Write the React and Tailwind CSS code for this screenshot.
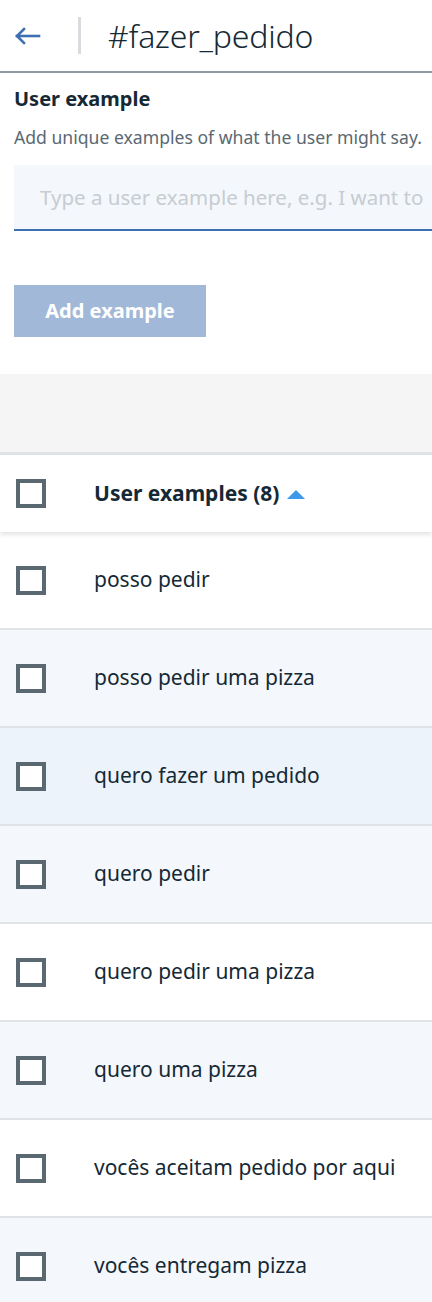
import React from 'react';

const examples = [
    { text: 'posso pedir', bg: 'bg-white' },
    { text: 'posso pedir uma pizza', bg: 'bg-[#f4f7fb]' },
    { text: 'quero fazer um pedido', bg: 'bg-[#edf3fb]' },
    { text: 'quero pedir', bg: 'bg-[#f4f7fb]' },
    { text: 'quero pedir uma pizza', bg: 'bg-white' },
    { text: 'quero uma pizza', bg: 'bg-[#f4f7fb]' },
    { text: 'vocês aceitam pedido por aqui', bg: 'bg-white' },
    { text: 'vocês entregam pizza', bg: 'bg-[#f4f7fb]' },
];

const Checkbox = () => (
    <span className="block w-[30px] h-[29px] border-[4px] border-[#5a6872] bg-white shrink-0"></span>
);

const App = () => {
    return (
        <div className="w-[432px] min-h-[1302px] overflow-hidden bg-white text-[#152935] font-['Noto_Sans','Open_Sans',sans-serif]">
            {/* header */}
            <header className="h-[73px] flex items-center border-b-2 border-[#8c9ba5]">
                <button className="w-[56px] pl-[14px] flex items-center text-[#3d70b2]">
                    <svg width="27" height="18" viewBox="0 0 27 18" fill="none" stroke="currentColor" strokeWidth="2.6" strokeLinecap="square">
                        <path d="M3 9 H25" />
                        <path d="M10 2 L3 9 L10 16" />
                    </svg>
                </button>
                <span className="ml-[22px] w-[3px] h-[37px] bg-[#d8dce0]"></span>
                <h1 className="ml-[27px] text-[32px] font-light tracking-[-0.2px] text-[#152935] whitespace-nowrap">#fazer_pedido</h1>
            </header>

            {/* form */}
            <section className="px-[14px] pt-[13px] pb-[37px]">
                <h2 className="text-[20px] font-bold leading-[26px]">User example</h2>
                <p className="mt-[13px] text-[17.6px] leading-[24px] text-[#5a6872] whitespace-nowrap">Add unique examples of what the user might say.</p>
                <div className="mt-[16px] w-[600px] h-[66px] bg-[#f4f7fb] border-b-2 border-[#3d70b2] flex items-center pl-[26px]">
                    <span className="text-[20.5px] text-[#c7ccd1] whitespace-nowrap">Type a user example here, e.g. I want to</span>
                </div>
                <button className="block mt-[54px] w-[192px] h-[52px] bg-[#a1b8d8] text-white text-[20px] font-bold">Add example</button>
            </section>

            {/* table */}
            <div className="h-[81px] bg-[#f5f5f5] border-b-[3px] border-[#dfe3e6]"></div>
            <div className="relative h-[77px] flex items-center pl-[16px] bg-white shadow-[0_3px_4px_rgba(0,0,0,0.1)] z-10">
                <Checkbox />
                <span className="ml-[48px] text-[21px] font-bold">User examples (8)</span>
                <svg className="ml-[8px]" width="18" height="10" viewBox="0 0 18 10">
                    <path d="M0 10 L9 1 L18 10 Z" fill="#3d9ae8" />
                </svg>
            </div>
            <ul>
                {examples.map((ex, i) => (
                    <li key={i} className={`h-[98px] flex items-center pl-[16px] border-b-2 border-[#dfe3e6] ${ex.bg}`}>
                        <Checkbox />
                        <span className="ml-[48px] text-[21px]">{ex.text}</span>
                    </li>
                ))}
            </ul>
        </div>
    );
};

export default App;
